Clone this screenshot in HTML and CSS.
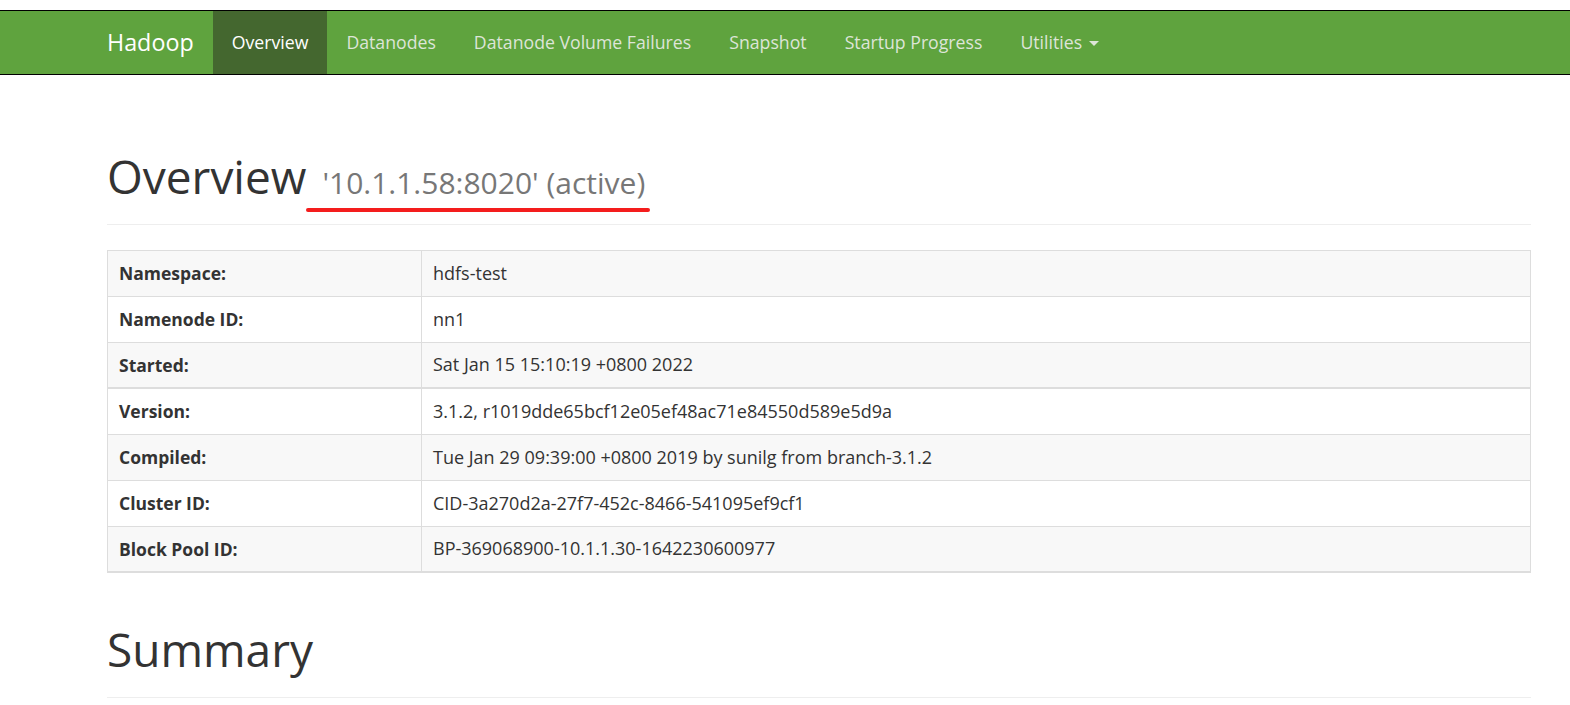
FILE: index.html
```html
<!DOCTYPE html>
<html>
<head>
<meta charset="utf-8">
<title>Namenode information</title>
<link rel="stylesheet" href="styles.css">
</head>
<body>
<div class="topstrip"></div>
<header class="navbar">
  <div class="container nav-inner">
    <a class="brand" href="#">Hadoop</a>
    <ul class="nav">
      <li class="active"><a href="#">Overview</a></li>
      <li><a href="#">Datanodes</a></li>
      <li><a href="#">Datanode Volume Failures</a></li>
      <li><a href="#">Snapshot</a></li>
      <li><a href="#">Startup Progress</a></li>
      <li><a href="#">Utilities <span class="caret"></span></a></li>
    </ul>
  </div>
</header>
<main class="container">
  <div class="page-header">
    <h1>Overview <small>'10.1.1.58:8020' (active)</small><span class="mark"></span></h1>
  </div>
  <table class="info">
    <tbody>
      <tr class="odd"><th>Namespace:</th><td>hdfs-test</td></tr>
      <tr><th>Namenode ID:</th><td>nn1</td></tr>
      <tr class="odd"><th>Started:</th><td>Sat Jan 15 15:10:19 +0800 2022</td></tr>
    </tbody>
    <tbody class="second">
      <tr><th>Version:</th><td>3.1.2, r1019dde65bcf12e05ef48ac71e84550d589e5d9a</td></tr>
      <tr class="odd"><th>Compiled:</th><td>Tue Jan 29 09:39:00 +0800 2019 by sunilg from branch-3.1.2</td></tr>
      <tr><th>Cluster ID:</th><td>CID-3a270d2a-27f7-452c-8466-541095ef9cf1</td></tr>
      <tr class="odd last"><th>Block Pool ID:</th><td>BP-369068900-10.1.1.30-1642230600977</td></tr>
    </tbody>
  </table>
  <div class="page-header summary">
    <h1>Summary</h1>
  </div>
</main>
</body>
</html>
```
FILE: styles.css
```css
* { box-sizing: border-box; }
html, body { margin: 0; padding: 0; background: #fff; overflow: hidden; }
body {
  font-family: "Open Sans", "Noto Sans", "Liberation Sans", sans-serif;
  font-size: 17.5px;
  color: #333;
  height: 705px;
}
.topstrip { height: 10px; }
.navbar {
  background: #5fa33e;
  border-top: 1px solid #000;
  border-bottom: 1px solid #000;
  height: 65px;
}
.container { margin-left: 88px; width: 1462px; padding: 0 19px; }
.nav-inner { display: flex; align-items: stretch; height: 63px; padding-left: 0; }
.brand {
  display: flex; align-items: center;
  padding: 0 19px 2px;
  font-size: 23.3px;
  color: #fff;
  text-decoration: none;
}
.nav { display: flex; list-style: none; margin: 0; padding: 0; }
.nav li { display: flex; }
.nav a {
  display: flex; align-items: center;
  padding: 0 19px 2px;
  color: #dde5d8;
  text-decoration: none;
  font-size: 17.7px;
}
.nav .active a { background: #44672f; color: #fff; }
.caret {
  display: inline-block;
  width: 0; height: 0;
  margin-left: 7px;
  margin-top: 3px;
  border-top: 5px solid #dde5d8;
  border-left: 5px solid transparent;
  border-right: 5px solid transparent;
}
.page-header {
  margin: 76px 0 25px;
  padding-bottom: 22px;
  border-bottom: 1px solid #eee;
}
.page-header h1 {
  position: relative;
  margin: 0;
  font-size: 46px;
  font-weight: 400;
  line-height: 1.1;
  color: #333;
}
.page-header small { font-size: 30px; color: #777; font-weight: 400; margin-left: 4px; }
.mark {
  position: absolute;
  left: 199px; top: 57px;
  width: 344px; height: 4px;
  background: #f41d1d;
  border-radius: 2px;
}
.info {
  width: 100%;
  border-collapse: collapse;
  border: 1px solid #ddd;
  border-bottom-width: 2px;
  margin-top: 1px;
}
.info th, .info td {
  height: 46px;
  padding: 0 11px;
  text-align: left;
  vertical-align: middle;
  border: 1px solid #ddd;
  font-size: 17.5px;
  line-height: 1.4;
}
.info td { font-size: 18px; }
.info th { width: 314px; font-weight: 700; }
.info tr.odd { background: #f8f8f8; }
.info tbody.second tr:first-child th,
.info tbody.second tr:first-child td { border-top: 2px solid #ddd; }
.info tr.last th, .info tr.last td { border-bottom: 2px solid #ddd; }
.summary { margin-top: 51px; }
```
